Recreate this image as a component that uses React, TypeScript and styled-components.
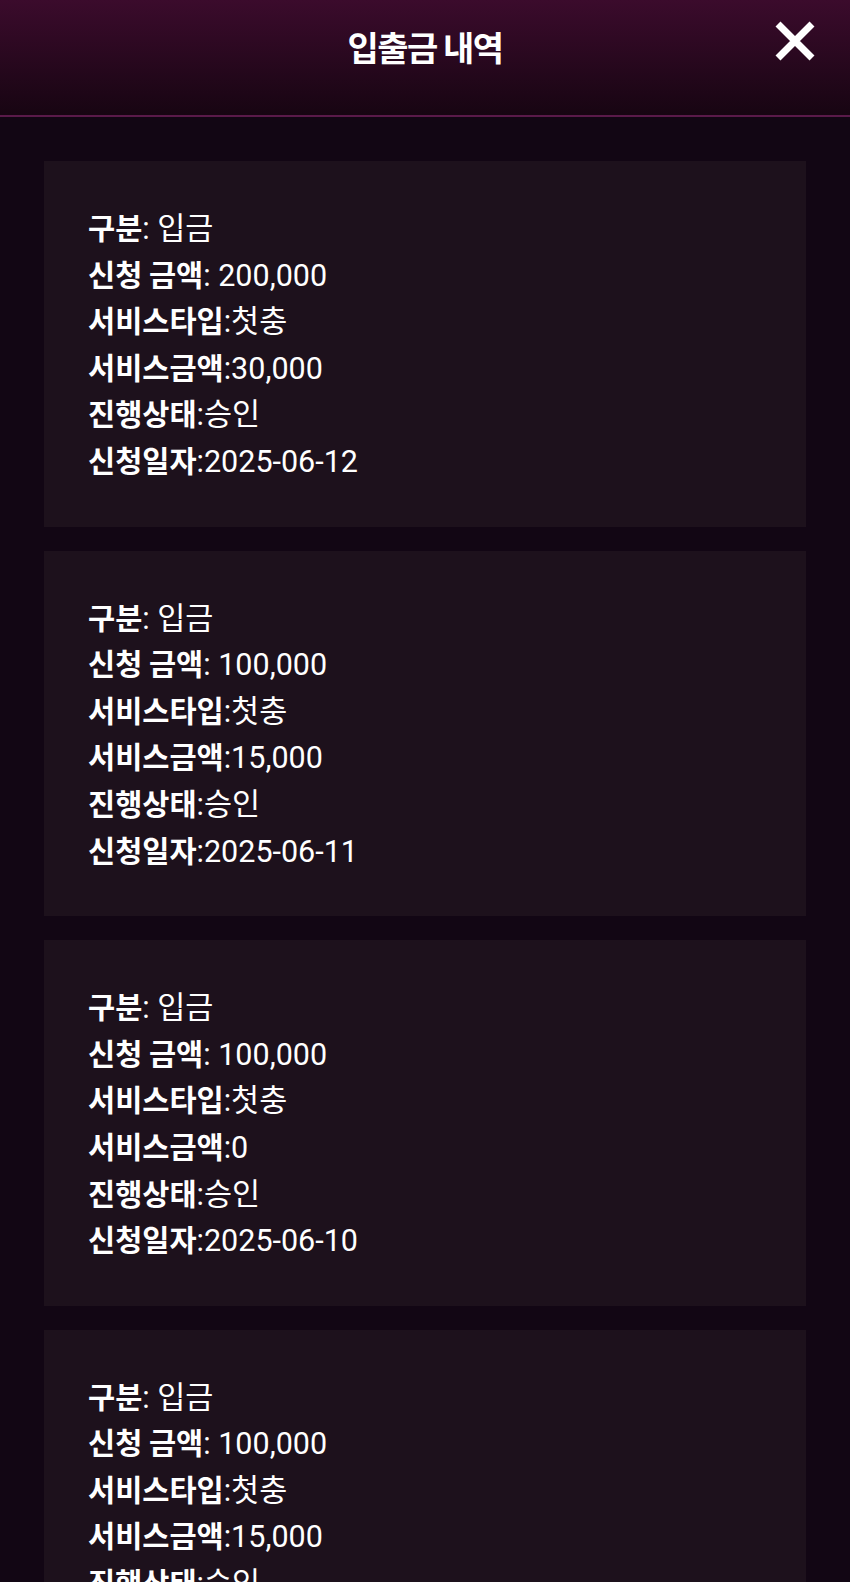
import React from 'react'
import styled, { createGlobalStyle } from 'styled-components'

const GlobalStyle = createGlobalStyle`
  html, body {
    margin: 0;
    padding: 0;
    background: #120614;
  }
  body {
    font-family: Roboto, "Noto Sans CJK KR", sans-serif;
    color: #ffffff;
  }
`

type Record = {
  type: string
  amount: string
  serviceType: string
  serviceAmount: string
  status: string
  date: string
}

const records: Record[] = [
  { type: '입금', amount: '200,000', serviceType: '첫충', serviceAmount: '30,000', status: '승인', date: '2025-06-12' },
  { type: '입금', amount: '100,000', serviceType: '첫충', serviceAmount: '15,000', status: '승인', date: '2025-06-11' },
  { type: '입금', amount: '100,000', serviceType: '첫충', serviceAmount: '0', status: '승인', date: '2025-06-10' },
  { type: '입금', amount: '100,000', serviceType: '첫충', serviceAmount: '15,000', status: '승인', date: '2025-06-09' },
]

const App = () => {
  return (
    <>
      <GlobalStyle />
      <Page>
        <Header>
          <Title>입출금 내역</Title>
          <CloseButton aria-label="close">
            <svg width="42" height="42" viewBox="0 0 42 42">
              <path d="M4 4 L38 38 M38 4 L4 38" stroke="#fff" strokeWidth="7" strokeLinecap="butt" />
            </svg>
          </CloseButton>
        </Header>
        <List>
          {records.map((r, i) => (
            <Card key={i}>
              <Line><Label>구분</Label>: {r.type}</Line>
              <Line><Label>신청 금액</Label>: {r.amount}</Line>
              <Line><Label>서비스타입</Label>:{r.serviceType}</Line>
              <Line><Label>서비스금액</Label>:{r.serviceAmount}</Line>
              <Line><Label>진행상태</Label>:{r.status}</Line>
              <Line><Label>신청일자</Label>:{r.date}</Line>
            </Card>
          ))}
        </List>
      </Page>
    </>
  )
}

export default App

const Page = styled.div`
  width: 100%;
  height: 1582px;
  overflow: hidden;
  background: #120614;
`

const Header = styled.div`
  position: relative;
  height: 115px;
  display: flex;
  align-items: flex-start;
  justify-content: center;
  background: linear-gradient(#3b0b2c, #170512);
  border-bottom: 2px solid #5a1a4a;
`

const Title = styled.div`
  margin-top: 27px;
  font-family: "Noto Sans CJK KR", sans-serif;
  font-size: 34px;
  font-weight: 700;
  line-height: 40px;
  letter-spacing: -1.5px;
`

const CloseButton = styled.button`
  position: absolute;
  top: 20px;
  right: 34px;
  width: 42px;
  height: 42px;
  padding: 0;
  border: 0;
  background: transparent;
  cursor: pointer;
  display: flex;
`

const List = styled.div`
  display: flex;
  flex-direction: column;
  gap: 24px;
  padding: 44px 44px 0;
`

const Card = styled.div`
  background: #1d111c;
  padding: 42px 44px 44px;
`

const Line = styled.div`
  height: 46.6px;
  font-size: 30.5px;
  line-height: 46.6px;
  font-weight: 400;
  white-space: nowrap;
`

const Label = styled.span`
  font-family: "Noto Sans CJK KR", sans-serif;
  font-size: 29.5px;
  font-weight: 700;
  line-height: 46.6px;
`
